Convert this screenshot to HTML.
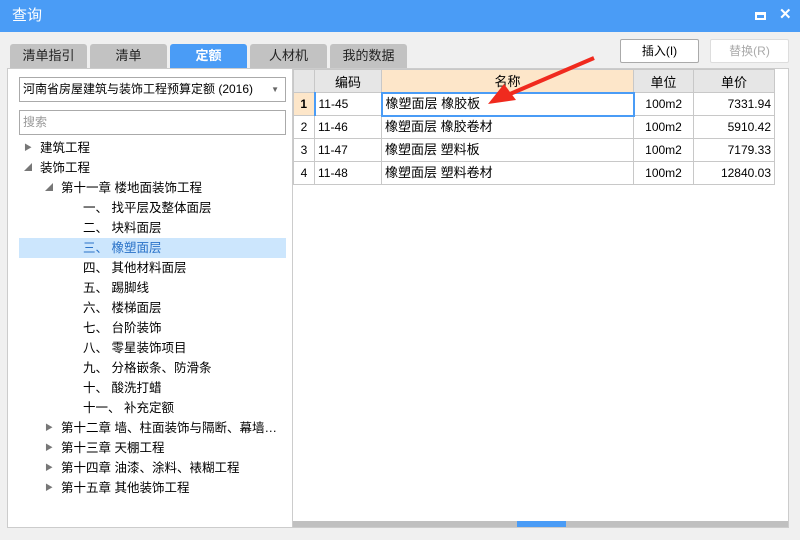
<!DOCTYPE html>
<html><head><meta charset="utf-8"><style>
*{margin:0;padding:0;box-sizing:border-box}
body{width:800px;height:540px;background:#f0f0f0;font-family:"Liberation Sans","Noto Sans CJK SC",sans-serif;font-size:12px;color:#000;position:relative;overflow:hidden;}
.abs{position:absolute}
.title{left:0;top:0;width:800px;height:32px;background:#4a9cf6;color:#fff;font-size:15px;line-height:32px;padding-left:12px}
.tab{top:44px;height:24px;width:77px;background:#c2c2c2;border-radius:3px 3px 0 0;text-align:center;line-height:24px;font-size:13px;color:#222}
.tab.on{background:#4a9cf6;color:#fff;font-weight:bold}
.btn{top:39px;height:24px;width:79px;border:1px solid #aaa;background:#fff;border-radius:2px;text-align:center;line-height:22px;font-size:12px}
.left{left:7px;top:68px;width:286px;height:460px;background:#fff;border:1px solid #ccc}
.box{left:19px;width:267px;height:25px;border:1px solid #aaa;background:#fff;line-height:23px;padding-left:3px;font-size:12px}
.tr{height:20px;line-height:20px;font-size:12.5px;left:19px;width:267px;white-space:nowrap}
.tr.sel{background:#cce6fd;color:#2a72c8}
.ar{position:absolute;top:0;font-size:8px;color:#777}
.grid{left:292px;top:68px;width:497px;height:460px;background:#fff;border:1px solid #ccc}
table{position:absolute;left:0;top:0;border-collapse:collapse;font-size:12px}
td{border:1px solid #c8c8c8;height:23px;padding:0 3px;white-space:nowrap;line-height:20px}
th{border:1px solid #c8c8c8;height:23px;font-weight:normal;background:#e6e6e6;font-size:13px}
</style></head><body>
<div class="abs title">查询</div>
<div class="abs" style="left:755px;top:12px;width:11px;height:8px;border:2px solid #fff;border-top-width:3px"></div>
<div class="abs" style="left:779px;top:5px;color:#fff;font-size:15px;font-weight:bold">✕</div>
<div class="abs tab" style="left:10px">清单指引</div>
<div class="abs tab" style="left:90px">清单</div>
<div class="abs tab on" style="left:170px">定额</div>
<div class="abs tab" style="left:250px">人材机</div>
<div class="abs tab" style="left:330px">我的数据</div>
<div class="abs btn" style="left:620px">插入(I)</div>
<div class="abs btn" style="left:710px;color:#aaa;border-color:#ddd">替换(R)</div>
<div class="abs left"></div>
<div class="abs box" style="top:77px">河南省房屋建筑与装饰工程预算定额 (2016)<span style="position:absolute;right:6px;top:0;font-size:8px;color:#666">▼</span></div>
<div class="abs box" style="top:110px;color:#999">搜索</div>
<div class="abs tr" style="top:138px"><span class="ar" style="left:5px">▶</span><span style="position:absolute;left:21px">建筑工程</span></div>
<div class="abs tr" style="top:158px"><span class="ar" style="left:5px">◢</span><span style="position:absolute;left:21px">装饰工程</span></div>
<div class="abs tr" style="top:178px"><span class="ar" style="left:26px">◢</span><span style="position:absolute;left:42px">第十一章 楼地面装饰工程</span></div>
<div class="abs tr" style="top:198px"><span style="position:absolute;left:64px">一、 找平层及整体面层</span></div>
<div class="abs tr" style="top:218px"><span style="position:absolute;left:64px">二、 块料面层</span></div>
<div class="abs tr sel" style="top:238px"><span style="position:absolute;left:64px">三、 橡塑面层</span></div>
<div class="abs tr" style="top:258px"><span style="position:absolute;left:64px">四、 其他材料面层</span></div>
<div class="abs tr" style="top:278px"><span style="position:absolute;left:64px">五、 踢脚线</span></div>
<div class="abs tr" style="top:298px"><span style="position:absolute;left:64px">六、 楼梯面层</span></div>
<div class="abs tr" style="top:318px"><span style="position:absolute;left:64px">七、 台阶装饰</span></div>
<div class="abs tr" style="top:338px"><span style="position:absolute;left:64px">八、 零星装饰项目</span></div>
<div class="abs tr" style="top:358px"><span style="position:absolute;left:64px">九、 分格嵌条、防滑条</span></div>
<div class="abs tr" style="top:378px"><span style="position:absolute;left:64px">十、 酸洗打蜡</span></div>
<div class="abs tr" style="top:398px"><span style="position:absolute;left:64px">十一、 补充定额</span></div>
<div class="abs tr" style="top:418px"><span class="ar" style="left:26px">▶</span><span style="position:absolute;left:42px">第十二章 墙、柱面装饰与隔断、幕墙…</span></div>
<div class="abs tr" style="top:438px"><span class="ar" style="left:26px">▶</span><span style="position:absolute;left:42px">第十三章 天棚工程</span></div>
<div class="abs tr" style="top:458px"><span class="ar" style="left:26px">▶</span><span style="position:absolute;left:42px">第十四章 油漆、涂料、裱糊工程</span></div>
<div class="abs tr" style="top:478px"><span class="ar" style="left:26px">▶</span><span style="position:absolute;left:42px">第十五章 其他装饰工程</span></div>
<div class="abs grid">
<table>
<tr><th style="width:21px"></th><th style="width:67px">编码</th><th style="width:252px;background:#fde6c9">名称</th><th style="width:60px">单位</th><th style="width:81px">单价</th></tr>
<tr><td style="background:#fde6c9;text-align:center;font-weight:bold;border-right:2px solid #4a9cf6">1</td><td>11-45</td><td style="border:2px solid #4a9cf6;font-size:13px">橡塑面层 橡胶板</td><td style="text-align:center">100m2</td><td style="text-align:right">7331.94</td></tr>
<tr><td style="text-align:center">2</td><td>11-46</td><td style="font-size:13px">橡塑面层 橡胶卷材</td><td style="text-align:center">100m2</td><td style="text-align:right">5910.42</td></tr>
<tr><td style="text-align:center">3</td><td>11-47</td><td style="font-size:13px">橡塑面层 塑料板</td><td style="text-align:center">100m2</td><td style="text-align:right">7179.33</td></tr>
<tr><td style="text-align:center">4</td><td>11-48</td><td style="font-size:13px">橡塑面层 塑料卷材</td><td style="text-align:center">100m2</td><td style="text-align:right">12840.03</td></tr>
</table>
<div class="abs" style="left:0;top:452px;width:495px;height:6px;background:#c0c0c0"></div>
<div class="abs" style="left:224px;top:452px;width:49px;height:6px;background:#4a9cf6"></div>
</div>
<svg class="abs" style="left:480px;top:54px" width="120" height="56"><path d="M114 4 L30 40" stroke="#f02a1e" stroke-width="4" fill="none"/><path d="M8 50 L24 30 L36 46 Z" fill="#f02a1e"/></svg>
</body></html>
